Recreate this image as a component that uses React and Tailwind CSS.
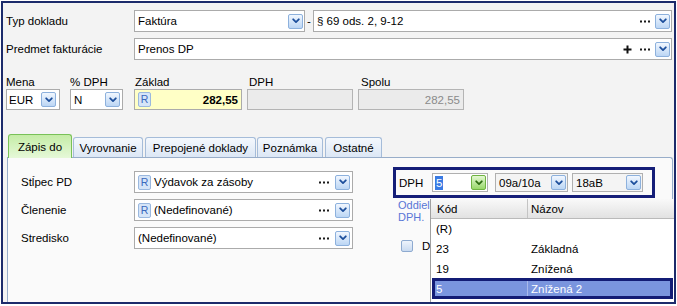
import React from "react";

const Chevron = ({ color }) => (
  <svg width="8" height="6" viewBox="0 0 8 6">
    <path d="M1.2 1.3 L4 4.1 L6.8 1.3" stroke={color} strokeWidth="1.8" fill="none" strokeLinecap="round" strokeLinejoin="round" />
  </svg>
);

function DropBtn({ green }) {
  return green ? (
    <span className="flex h-[15px] w-[15px] shrink-0 items-center justify-center rounded-[2px] border border-[#6fb342] bg-linear-to-b from-[#e4f8d2] to-[#98d767]">
      <Chevron color="#2f6e12" />
    </span>
  ) : (
    <span className="flex h-[15px] w-[15px] shrink-0 items-center justify-center rounded-[2px] border border-[#8db1dd] bg-linear-to-b from-[#f1f7ff] to-[#bcd6f4]">
      <Chevron color="#1d4f9c" />
    </span>
  );
}

const Dots = () => (
  <svg width="10" height="3" viewBox="0 0 10 3" className="shrink-0">
    <rect x="0" y="0.5" width="2" height="2" fill="#1a1a1a" />
    <rect x="4" y="0.5" width="2" height="2" fill="#1a1a1a" />
    <rect x="8" y="0.5" width="2" height="2" fill="#1a1a1a" />
  </svg>
);

const Plus = () => (
  <svg width="9" height="9" viewBox="0 0 9 9" className="shrink-0">
    <path d="M4.5 0.5V8.5M0.5 4.5H8.5" stroke="#111" strokeWidth="2" />
  </svg>
);

const RBadge = () => (
  <span className="flex h-[15px] w-[13px] shrink-0 items-center justify-center rounded-[2px] border border-[#9ab8df] bg-[#d6e5f8] text-[10.5px] leading-none text-[#3a69bd]">
    R
  </span>
);

export default function App() {
  return (
    <div className="h-[306px] w-[677px] bg-white p-[1px] text-[11.5px] leading-[14px] text-black [font-family:'Liberation_Sans',Arial,sans-serif]">
      <div className="relative flex h-[303px] w-[675px] flex-col overflow-hidden border-2 border-[#1c2b6b] bg-[#f3f3f3]">
        {/* Row 1 */}
        <div className="ml-[3px] mt-[7px] flex h-[22px] items-center">
          <div className="w-[128px]">Typ dokladu</div>
          <div className="flex h-[22px] w-[171px] items-center border border-[#ababab] bg-white pl-[3px] pr-[1px]">
            <span className="flex-1">Faktúra</span>
            <DropBtn />
          </div>
          <div className="w-[8px] text-center">-</div>
          <div className="flex h-[22px] w-[359px] items-center border border-[#ababab] bg-white pl-[3px] pr-[1px]">
            <span className="flex-1">§ 69 ods. 2, 9-12</span>
            <Dots />
            <span className="w-[5px]" />
            <DropBtn />
          </div>
        </div>

        {/* Row 2 */}
        <div className="ml-[3px] mt-[6px] flex h-[22px] items-center">
          <div className="w-[128px]">Predmet fakturácie</div>
          <div className="flex h-[22px] w-[538px] items-center border border-[#ababab] bg-white pl-[3px] pr-[1px]">
            <span className="flex-1">Prenos DP</span>
            <Plus />
            <span className="w-[8px]" />
            <Dots />
            <span className="w-[5px]" />
            <DropBtn />
          </div>
        </div>

        {/* Row 3 */}
        <div className="ml-[3px] mt-[16px] flex">
          <div className="flex w-[54px] flex-col">
            <div className="h-[13px] leading-[13px]">Mena</div>
            <div className="flex h-[21px] items-center border border-[#ababab] bg-white pl-[2px] pr-[3px]">
              <span className="flex-1">EUR</span>
              <DropBtn />
            </div>
          </div>
          <div className="ml-[10px] flex w-[53px] flex-col">
            <div className="h-[13px] leading-[13px]">% DPH</div>
            <div className="flex h-[21px] items-center border border-[#ababab] bg-white pl-[3px] pr-[2px]">
              <span className="flex-1">N</span>
              <DropBtn />
            </div>
          </div>
          <div className="ml-[11px] flex w-[108px] flex-col">
            <div className="h-[13px] pl-[1px] leading-[13px]">Základ</div>
            <div className="flex h-[21px] items-center border border-[#ababab] bg-[#ffffc6] pl-[3px] pr-[3px]">
              <RBadge />
              <span className="flex-1 text-right font-bold">282,55</span>
            </div>
          </div>
          <div className="ml-[5px] flex w-[106px] flex-col">
            <div className="h-[13px] pl-[2px] leading-[13px]">DPH</div>
            <div className="flex h-[21px] items-center border border-[#b4b4b4] bg-[#ebebeb]" />
          </div>
          <div className="ml-[5px] flex w-[106px] flex-col">
            <div className="h-[13px] pl-[3px] leading-[13px]">Spolu</div>
            <div className="flex h-[21px] items-center justify-end border border-[#b4b4b4] bg-[#ebebeb] pr-[3px] text-[#8a8a8a]">
              282,55
            </div>
          </div>
        </div>

        {/* Tabs */}
        <div className="ml-[5px] mt-[24px] flex h-[23px] items-end">
          <div className="relative z-10 -mb-[1px] flex h-[24px] w-[64px] items-center justify-center rounded-t-[3px] border border-b-0 border-[#79c158] bg-linear-to-b from-[#c4eca6] to-[#e6f8d8]">
            Zápis do
          </div>
          <div className="ml-[1px] flex h-[20px] w-[70px] items-center justify-center rounded-t-[3px] border border-b-0 border-[#a5bcd9] bg-linear-to-b from-[#f4f8fd] to-[#dce7f5]">
            Vyrovnanie
          </div>
          <div className="ml-[2px] flex h-[20px] w-[111px] items-center justify-center rounded-t-[3px] border border-b-0 border-[#a5bcd9] bg-linear-to-b from-[#f4f8fd] to-[#dce7f5]">
            Prepojené doklady
          </div>
          <div className="ml-[1px] flex h-[20px] w-[66px] items-center justify-center rounded-t-[3px] border border-b-0 border-[#a5bcd9] bg-linear-to-b from-[#f4f8fd] to-[#dce7f5]">
            Poznámka
          </div>
          <div className="ml-[2px] flex h-[20px] w-[57px] items-center justify-center rounded-t-[3px] border border-b-0 border-[#a5bcd9] bg-linear-to-b from-[#f4f8fd] to-[#dce7f5]">
            Ostatné
          </div>
        </div>

        {/* Panel */}
        <div className="ml-[4px] mr-[1px] flex flex-1 rounded-tr-[3px] border border-b-0 border-[#98adc9] bg-[#fafafa] pl-[13px] pt-[9px]">
          <div className="mt-[4px] flex flex-col gap-[6px]">
            <div className="flex h-[22px] items-center">
              <div className="w-[113px]">Stĺpec PD</div>
              <div className="flex h-[22px] w-[219px] items-center border border-[#ababab] bg-white pl-[3px] pr-[2px]">
                <RBadge />
                <span className="ml-[3px] flex-1">Výdavok za zásoby</span>
                <Dots />
                <span className="w-[6px]" />
                <DropBtn />
              </div>
            </div>
            <div className="flex h-[22px] items-center">
              <div className="w-[113px]">Členenie</div>
              <div className="flex h-[22px] w-[219px] items-center border border-[#ababab] bg-white pl-[3px] pr-[2px]">
                <RBadge />
                <span className="ml-[3px] flex-1">(Nedefinované)</span>
                <Dots />
                <span className="w-[6px]" />
                <DropBtn />
              </div>
            </div>
            <div className="flex h-[22px] items-center">
              <div className="w-[113px]">Stredisko</div>
              <div className="flex h-[22px] w-[219px] items-center border border-[#ababab] bg-white pl-[3px] pr-[2px]">
                <span className="flex-1">(Nedefinované)</span>
                <Dots />
                <span className="w-[6px]" />
                <DropBtn />
              </div>
            </div>
          </div>

          <div className="ml-[40px] flex flex-col">
            <div className="flex h-[31px] w-[262px] items-center border-[3px] border-[#151e78] pl-[3px]">
              <div className="w-[33px]">DPH</div>
              <div className="flex h-[19px] w-[56px] items-center border border-[#b0b0b0] bg-white pl-[2px] pr-[1px]">
                <span className="flex-1">
                  <span className="inline-block bg-[#3a7be3] px-[1px] leading-[14px] text-white">5</span>
                </span>
                <DropBtn green />
              </div>
              <div className="ml-[7px] flex h-[19px] w-[73px] items-center border border-[#b0b0b0] bg-[#f4f4f4] pl-[3px] pr-[1px]">
                <span className="flex-1">09a/10a</span>
                <DropBtn />
              </div>
              <div className="ml-[4px] flex h-[19px] w-[71px] items-center border border-[#b0b0b0] bg-[#f4f4f4] pl-[3px] pr-[1px]">
                <span className="flex-1">18aB</span>
                <DropBtn />
              </div>
            </div>
            <div className="ml-[5px] mt-[1px] text-[11px] leading-[12px] text-[#5876d6]">
              <div>Oddiel</div>
              <div>DPH.</div>
            </div>
            <div className="ml-[8px] mt-[16px] flex items-center">
              <span className="h-[12px] w-[12px] rounded-[2px] border border-[#8eaad0] bg-linear-to-b from-[#eef4fc] to-[#c9daf0]" />
              <span className="ml-[9px]">D</span>
            </div>
          </div>
        </div>

        {/* Dropdown popup */}
        <div className="absolute left-[427px] top-[196px] h-[120px] w-[250px] border-l border-[#a0a0a0] bg-white">
          <div className="flex h-[20px] items-center border-b border-[#bababa] bg-linear-to-b from-[#f9f9f9] to-[#e2e2e2]">
            <div className="flex h-full w-[97px] items-center border-r border-[#c4c4c4] pl-[6px]">Kód</div>
            <div className="pl-[3px]">Názov</div>
          </div>
          <div className="flex h-[20px] items-center">
            <div className="w-[97px] pl-[5px]">(R)</div>
            <div className="pl-[3px]"></div>
          </div>
          <div className="flex h-[20px] items-center">
            <div className="w-[97px] pl-[5px]">23</div>
            <div className="pl-[3px]">Základná</div>
          </div>
          <div className="flex h-[19px] items-center">
            <div className="w-[97px] pl-[5px]">19</div>
            <div className="pl-[3px]">Znížená</div>
          </div>
          <div className="ml-[1px] flex h-[21px] w-[241px] items-center border-[3px] border-[#131c75] bg-[#7a95de] text-white">
            <div className="flex h-full w-[93px] items-center border-r border-[#a9baea] pl-[1px]">5</div>
            <div className="pl-[3px]">Znížená 2</div>
          </div>
        </div>
      </div>
    </div>
  );
}
